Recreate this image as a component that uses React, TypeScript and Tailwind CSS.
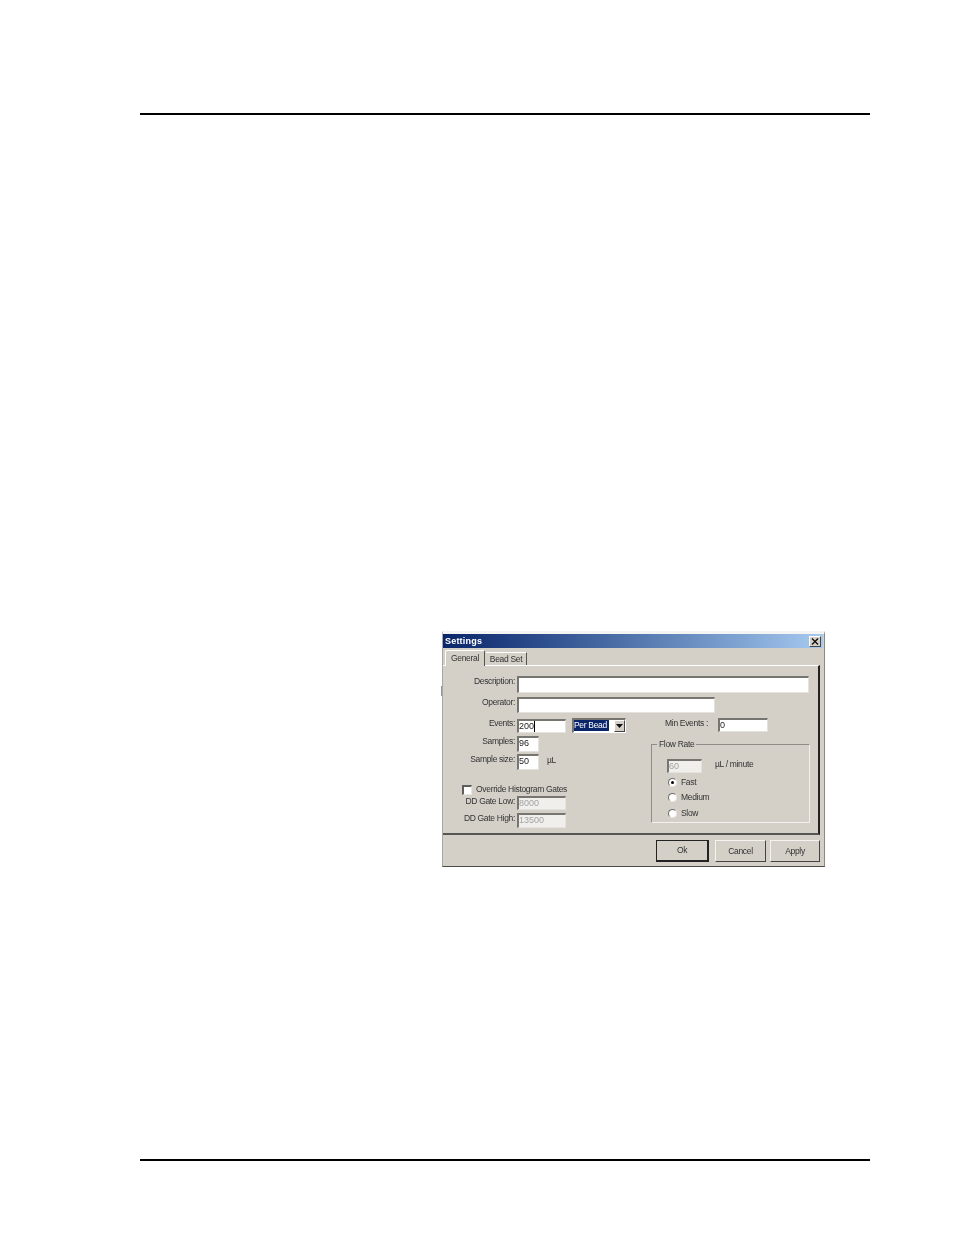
import React from "react";

const txt = "text-[8.5px] leading-none tracking-[-0.32px]";
const num = "text-[9px] leading-none";

function Field({ w, h, value, disabled, caret, className = "" }: { w: string; h: string; value?: string; disabled?: boolean; caret?: boolean; className?: string }) {
  return (
    <div className={`${w} ${h} ${disabled ? "bg-[#f0efec] text-[#a3a3a3]" : "bg-white text-[#222]"} border-t-2 border-l-2 border-r border-b border-t-[#77756f] border-l-[#77756f] border-r-[#e4e2dc] border-b-[#e4e2dc] flex items-start pt-px ${num} shrink-0 ${className}`}>
      <span>{value}</span>
      {caret && <span className="w-px h-[11px] -mt-px bg-black" />}
    </div>
  );
}

function Label({ children }: { children: React.ReactNode }) {
  return <div className={`w-[72px] pt-px text-right ${txt} text-[#333] whitespace-nowrap shrink-0`}>{children}</div>;
}

function Row({ label, className = "", children }: { label: string; className?: string; children: React.ReactNode }) {
  return (
    <div className={`flex items-start gap-[2px] ${className}`}>
      <Label>{label}</Label>
      {children}
    </div>
  );
}

function Radio({ checked, label, className = "" }: { checked?: boolean; label: string; className?: string }) {
  return (
    <div className={`flex items-center h-[10px] ml-[16px] ${className}`}>
      <div className="w-[9px] h-[9px] rounded-full bg-white border border-t-[#6f6d68] border-l-[#6f6d68] border-r-[#e8e6e0] border-b-[#e8e6e0] flex items-center justify-center shrink-0">
        {checked && <div className="w-[3px] h-[3px] rounded-full bg-black" />}
      </div>
      <span className={`ml-[4px] ${txt} text-[#333]`}>{label}</span>
    </div>
  );
}

function Btn({ label, primary, className = "" }: { label: string; primary?: boolean; className?: string }) {
  return (
    <div className={`h-[22px] flex items-center justify-center ${txt} text-[#333] border ${primary ? "border-[#222] border-r-2 border-b-2" : "border-t-[#f4f3f0] border-l-[#f4f3f0] border-r-[#444] border-b-[#444]"} ${className}`}>
      {label}
    </div>
  );
}

export default function App() {
  return (
    <div className="w-[954px] h-[1235px] bg-white pt-[113px] font-['Liberation_Sans',Arial,sans-serif]">
      <div className="ml-[140px] w-[730px] h-[2px] bg-black" />

      <div className="relative ml-[442px] mt-[516px] w-[383px] h-[236px] bg-[#d4d0c8] border-l border-l-[#a9a7a2] border-r border-r-[#8a8883] border-b border-b-[#4c4b48] border-t-[3px] border-t-[#f4f4f2] flex flex-col blur-[0.25px]">
        <div className="absolute -left-[2px] top-[52px] w-px h-[10px] bg-[#8d97a8]" />

        {/* title bar */}
        <div className="h-[14px] mr-px bg-gradient-to-r from-[#0a246a] to-[#a6caf0] flex items-center justify-between pl-[2px] pr-[2px] shrink-0">
          <span className="text-[9px] font-bold text-white tracking-[0.2px] leading-none">Settings</span>
          <div className="w-[12px] h-[11px] bg-[#d4d0c8] border border-t-white border-l-white border-r-[#444] border-b-[#444] flex items-center justify-center">
            <svg width="8" height="7" viewBox="0 0 8 7"><path d="M1 0.5 L7 6.5 M7 0.5 L1 6.5" stroke="#111" strokeWidth="1.4" /></svg>
          </div>
        </div>

        {/* tabs */}
        <div className="flex items-end h-[17px] pl-[2px] shrink-0 relative z-10">
          <div className={`w-[40px] h-[16px] -mb-px bg-[#d4d0c8] border-t border-l border-t-white border-l-white border-r border-r-[#555] rounded-t-[2px] flex items-center justify-center ${txt} text-[#333]`}>General</div>
          <div className={`w-[41px] h-[13px] border-t border-t-white border-r border-r-[#555] flex items-center justify-center ${txt} text-[#333] ml-[1px]`}>Bead Set</div>
        </div>

        {/* tab panel */}
        <div className="w-[377px] h-[170px] border-t border-t-white border-r-2 border-r-[#222] border-b-2 border-b-[#555] pt-[10px] shrink-0">
          <Row label="Description:">
            <Field w="w-[292px]" h="h-[17px]" />
          </Row>
          <Row label="Operator:" className="mt-[4px]">
            <Field w="w-[198px]" h="h-[16px]" />
          </Row>

          <div className="flex mt-[5px]">
            <div className="w-[208px] shrink-0">
              <Row label="Events:">
                <Field w="w-[49px]" h="h-[14px]" value="200" caret className="mt-px" />
                <div className="ml-[4px] w-[54px] h-[15px] border-t-2 border-l-2 border-r border-b border-t-[#77756f] border-l-[#77756f] border-r-white border-b-white bg-white flex items-center justify-between">
                  <span className={`bg-[#0a246a] text-white ${txt} h-[11px] w-[35px] -mt-px flex items-center whitespace-nowrap`}>Per Bead</span>
                  <div className="w-[11px] h-[12px] bg-[#d4d0c8] border border-t-white border-l-white border-r-[#444] border-b-[#444] flex items-center justify-center">
                    <svg width="7" height="4" viewBox="0 0 7 4"><path d="M0 0 H7 L3.5 4 Z" fill="#111" /></svg>
                  </div>
                </div>
              </Row>
              <Row label="Samples:" className="mt-[3px]">
                <Field w="w-[22px]" h="h-[16px]" value="96" />
              </Row>
              <Row label="Sample size:" className="mt-[2px]">
                <Field w="w-[22px]" h="h-[16px]" value="50" />
                <span className={`ml-[6px] mt-[2px] ${txt} text-[#333]`}>µL</span>
              </Row>
              <div className="flex items-start mt-[15px] ml-[19px] h-[10px]">
                <div className="w-[10px] h-[10px] bg-white border-t-2 border-l-2 border-t-[#5f5e5a] border-l-[#5f5e5a] border-r border-b border-r-[#e8e6e0] border-b-[#e8e6e0]" />
                <span className={`ml-[4px] ${txt} text-[#333] whitespace-nowrap`}>Override Histogram Gates</span>
              </div>
              <Row label="DD Gate Low:" className="mt-px">
                <Field w="w-[49px]" h="h-[14px]" value="8000" disabled />
              </Row>
              <Row label="DD Gate High:" className="mt-[3px]">
                <Field w="w-[49px]" h="h-[15px]" value="13500" disabled />
              </Row>
            </div>

            <div className="w-[159px] shrink-0">
              <div className="flex items-start h-[14px]">
                <span className={`w-[57px] pt-px text-right ${txt} text-[#333] whitespace-nowrap`}>Min Events :</span>
                <Field w="w-[50px]" h="h-[14px]" value="0" className="ml-[10px]" />
              </div>
              <div className="relative mt-[12px] w-[159px] h-[79px] border border-t-[#8f8d88] border-l-[#8f8d88] border-r-[#f2f1ee] border-b-[#f2f1ee] pt-[14px]">
                <span className={`absolute left-[5px] -top-[5px] bg-[#d4d0c8] px-[2px] ${txt} text-[#333]`}>Flow Rate</span>
                <div className="flex items-start ml-[15px]">
                  <Field w="w-[35px]" h="h-[14px]" value="60" disabled />
                  <span className={`ml-[13px] mt-px ${txt} text-[#333]`}>µL / minute</span>
                </div>
                <Radio checked label="Fast" className="mt-[4px]" />
                <Radio label="Medium" className="mt-[5px]" />
                <Radio label="Slow" className="mt-[6px]" />
              </div>
            </div>
          </div>
        </div>

        {/* footer buttons */}
        <div className="flex pl-[213px] pt-[5px] shrink-0">
          <Btn label="Ok" primary className="w-[53px]" />
          <Btn label="Cancel" className="w-[51px] ml-[6px]" />
          <Btn label="Apply" className="w-[50px] ml-[4px]" />
        </div>
      </div>

      <div className="ml-[140px] mt-[292px] w-[730px] h-[2px] bg-black" />
    </div>
  );
}
